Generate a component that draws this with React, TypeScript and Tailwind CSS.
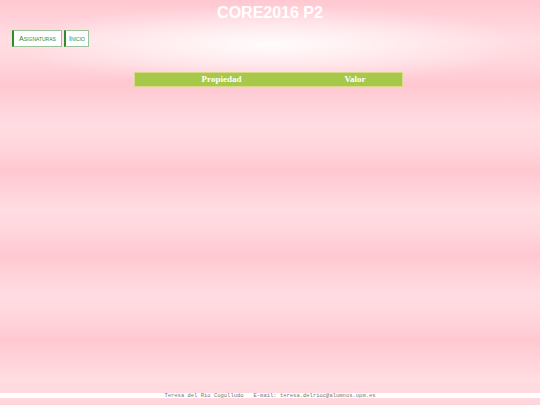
export default function App() {
  return (
    <div
      className="relative w-[540px] h-[405px] overflow-hidden flex flex-col"
      style={{
        backgroundColor: "#ffd3da",
        backgroundImage:
          "radial-gradient(ellipse 260px 40px at 270px 45px, rgba(255,255,255,0.9), rgba(255,255,255,0) 100%), repeating-linear-gradient(180deg, #ffc8d1 0px, #ffdde2 40px, #ffd7dd 60px, #ffc8d1 85px)",
      }}
    >
      <h1 className="h-[25px] pt-[3px] text-center text-white font-bold text-[16px] leading-[20px] font-['Liberation_Sans',Arial,sans-serif]">
        CORE2016 P2
      </h1>
      <div className="flex gap-[2px] pl-[12px] pt-[5px]">
        <button className="h-[17px] w-[50px] px-0 bg-white border border-[#9cc29c] border-l-2 border-l-[#2e8b2e] text-[#2e8b2e] text-[7px] leading-[13px] [font-variant:small-caps] font-['Liberation_Sans',Arial,sans-serif]">
          Asignaturas
        </button>
        <button className="h-[17px] w-[25px] px-0 bg-white border border-[#9cc29c] border-l-2 border-l-[#2e8b2e] text-[#2e8b2e] text-[7px] leading-[13px] [font-variant:small-caps] font-['Liberation_Sans',Arial,sans-serif]">
          Inicio
        </button>
      </div>
      <div className="flex justify-center pt-[25px] pr-[4px]">
        <div className="flex w-[269px] h-[15px] bg-[#a8c84a] border border-[#d9d98a] text-white font-bold text-[9px] leading-[13px] font-['Liberation_Serif','Times_New_Roman',serif]">
          <div className="w-[174px] text-center">Propiedad</div>
          <div className="flex-1 text-center">Valor</div>
        </div>
      </div>
      <div className="flex-1" />
      <div className="mb-[7px] h-[5px] bg-white text-center text-[#777] text-[5.5px] leading-[5px] font-['Liberation_Mono','Courier_New',monospace] whitespace-pre">
        {"Teresa del Rio Cogolludo   E-mail: teresa.delrioc@alumnos.upm.es"}
      </div>
    </div>
  );
}
